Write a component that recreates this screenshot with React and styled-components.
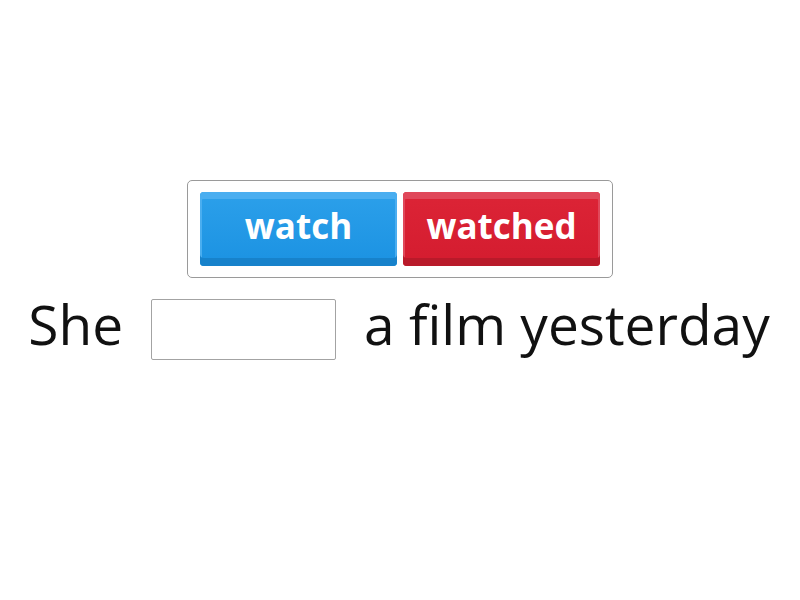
import React from "react";
import styled, { createGlobalStyle } from "styled-components";

const GlobalStyle = createGlobalStyle`
  html, body {
    margin: 0;
    padding: 0;
    background: #fff;
  }
  body {
    font-family: "Open Sans", "Liberation Sans", sans-serif;
  }
`;

const Page = styled.div`
  width: 800px;
  height: 600px;
  display: flex;
  flex-direction: column;
  align-items: center;
  padding-top: 180px;
  box-sizing: border-box;
`;

const Options = styled.div`
  display: flex;
  gap: 6px;
  padding: 11px 12px;
  border: 1px solid #9a9a9a;
  border-radius: 5px;
`;

const Choice = styled.button`
  width: 197px;
  height: 74px;
  border: none;
  border-radius: 4px;
  padding: 0 0 7px;
  font-family: "Open Sans", sans-serif;
  font-weight: 700;
  font-size: 35px;
  color: #fff;
  cursor: pointer;
  background: linear-gradient(${(p) => p.$top}, ${(p) => p.$base});
  box-shadow:
    inset 0 -8px 0 ${(p) => p.$dark},
    inset 2px 0 0 ${(p) => p.$light},
    inset -2px 0 0 ${(p) => p.$light},
    inset 0 7px 0 ${(p) => p.$light};
`;

const Sentence = styled.div`
  display: flex;
  align-items: flex-start;
  margin-top: 8px;
  margin-left: -2px;
  font-size: 55px;
  line-height: 75px;
  color: #111;
  gap: 28px;
`;

const Blank = styled.div`
  width: 183px;
  height: 59px;
  margin-top: 13px;
  border: 1px solid #a3a3a3;
  border-radius: 2px;
`;

export default function App() {
  return (
    <>
      <GlobalStyle />
      <Page>
        <Options>
          <Choice $top="#2ca0ea" $base="#1b92e2" $dark="#1782cb" $light="#4aaef0">
            watch
          </Choice>
          <Choice $top="#dc2436" $base="#d41c2f" $dark="#b91a2a" $light="#e0485a">
            watched
          </Choice>
        </Options>
        <Sentence>
          <span>She</span>
          <Blank />
          <span>a film yesterday</span>
        </Sentence>
      </Page>
    </>
  );
}
